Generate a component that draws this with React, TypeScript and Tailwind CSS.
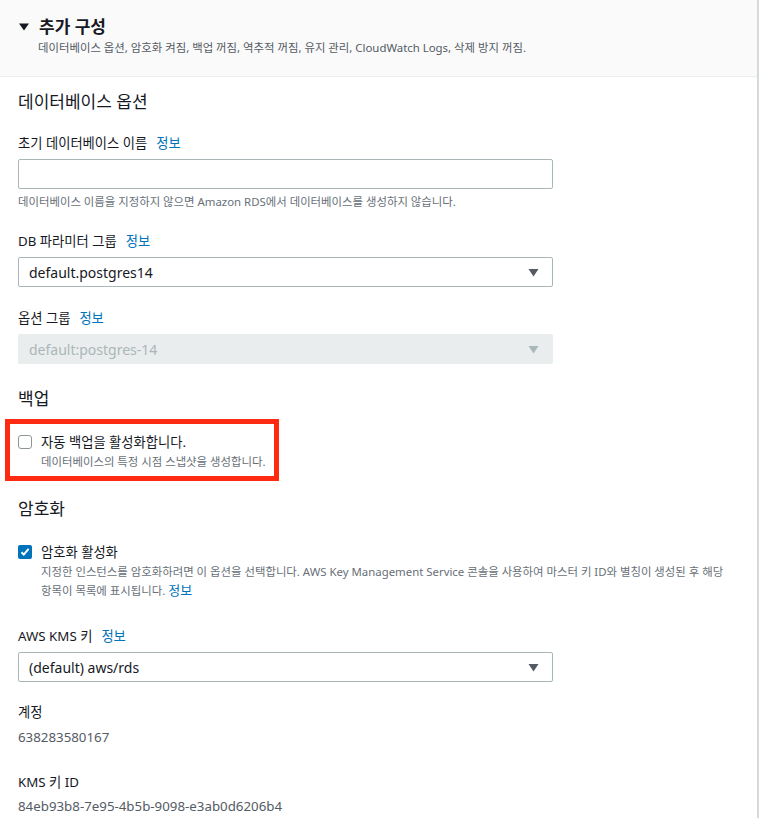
import React from "react";

const font = { fontFamily: '"Noto Sans", "Noto Sans CJK KR", sans-serif' };

function Caret({ disabled }: { disabled?: boolean }) {
  return (
    <svg width="11" height="9" viewBox="0 0 11 9" className="shrink-0">
      <path d="M0.5 1h10L5.5 8.5z" fill={disabled ? "#aab7b8" : "#545b64"} />
    </svg>
  );
}

function Label({ text, info = true }: { text: string; info?: boolean }) {
  return (
    <div className="text-[13.3px] leading-5 text-[#16191f]">
      {text}
      {info && <span className="ml-[9px] text-[#0073bb]">정보</span>}
    </div>
  );
}

function Select({ value, disabled }: { value: string; disabled?: boolean }) {
  return (
    <div
      className={
        disabled
          ? "flex h-[30px] w-[535px] items-center justify-between rounded-[2px] border border-[#eaeded] bg-[#eaeded] pl-[10px] pr-[13px] text-[14px] text-[#aab7b8]"
          : "flex h-[30px] w-[535px] items-center justify-between rounded-[2px] border border-[#aab7b8] bg-white pl-[10px] pr-[13px] text-[14px] text-[#16191f]"
      }
    >
      <span>{value}</span>
      <Caret disabled={disabled} />
    </div>
  );
}

export default function App() {
  return (
    <div style={font} className="min-h-[818px] w-[760px] bg-white">
      <div className="min-h-[818px] w-[759px] border-r-2 border-[#d5dbdb] bg-white">
        <div className="border-b border-[#eaeded] bg-[#fafafa] pb-5 pt-4">
          <div className="flex items-center gap-[10px] pl-[19px]">
            <svg width="10" height="8" viewBox="0 0 10 8">
              <path d="M0 0.5h10L5 7.5z" fill="#16191f" />
            </svg>
            <h1 className="text-[17px] font-bold leading-[22px] text-[#16191f]">추가 구성</h1>
          </div>
          <p className="mt-[2px] pl-[38px] text-[11.4px] leading-4 text-[#545b64]">
            데이터베이스 옵션, 암호화 켜짐, 백업 꺼짐, 역추적 꺼짐, 유지 관리, CloudWatch Logs, 삭제 방지 꺼짐.
          </p>
        </div>

        <div className="px-[18px] pt-[13px]">
          <h2 className="text-[17px] leading-6 text-[#16191f]">데이터베이스 옵션</h2>

          <div className="mt-[19px]">
            <Label text="초기 데이터베이스 이름" />
          </div>
          <div className="mt-[6px] h-[30px] w-[535px] rounded-[2px] border border-[#aab7b8] bg-white" />
          <p className="mt-[5px] text-[11.4px] leading-4 text-[#687078]">
            데이터베이스 이름을 지정하지 않으면 Amazon RDS에서 데이터베이스를 생성하지 않습니다.
          </p>

          <div className="mt-[21px]">
            <Label text="DB 파라미터 그룹" />
          </div>
          <div className="mt-[6px]">
            <Select value="default.postgres14" />
          </div>

          <div className="mt-[21px]">
            <Label text="옵션 그룹" />
          </div>
          <div className="mt-[6px]">
            <Select value="default:postgres-14" disabled />
          </div>

          <h2 className="mt-[23px] text-[17px] leading-6 text-[#16191f]">백업</h2>

          <div className="-ml-[13px] mt-2 inline-block border-[5px] border-[#ff2a12] pb-[6px] pl-[8px] pr-[8px] pt-2">
            <div className="flex items-start gap-[9px]">
              <div className="mt-[3px] h-[14px] w-[14px] rounded-[3px] border border-[#8d9696] bg-white" />
              <div>
                <div className="text-[13.3px] leading-5 text-[#16191f]">자동 백업을 활성화합니다.</div>
                <div className="mt-[2px] text-[11.4px] leading-4 text-[#687078]">
                  데이터베이스의 특정 시점 스냅샷을 생성합니다.
                </div>
              </div>
            </div>
          </div>

          <h2 className="mt-4 text-[17px] leading-6 text-[#16191f]">암호화</h2>

          <div className="mt-[21px] flex items-start gap-[9px]">
            <div className="mt-[3px] flex h-[14px] w-[14px] items-center justify-center rounded-[2px] bg-[#0073bb]">
              <svg width="10" height="10" viewBox="0 0 10 10">
                <path d="M1.5 5.2l2.3 2.4L8.6 1.8" fill="none" stroke="white" strokeWidth="2" />
              </svg>
            </div>
            <div>
              <div className="text-[13.3px] leading-5 text-[#16191f]">암호화 활성화</div>
              <p className="mt-[1px] whitespace-nowrap text-[11.4px] leading-[18px] text-[#687078]">
                지정한 인스턴스를 암호화하려면 이 옵션을 선택합니다. AWS Key Management Service 콘솔을 사용하여 마스터 키 ID와 별칭이 생성된 후 해당
                <br />
                항목이 목록에 표시됩니다. <span className="text-[13px] text-[#0073bb]">정보</span>
              </p>
            </div>
          </div>

          <div className="mt-[26px]">
            <Label text="AWS KMS 키" />
          </div>
          <div className="mt-[6px]">
            <Select value="(default) aws/rds" />
          </div>

          <div className="mt-5 text-[13.3px] leading-5 text-[#16191f]">계정</div>
          <div className="mt-[5px] text-[13.3px] leading-5 text-[#545b64]">638283580167</div>

          <div className="mt-[25px] text-[13.3px] leading-5 text-[#16191f]">KMS 키 ID</div>
          <div className="mt-[4px] text-[13.3px] leading-5 text-[#545b64]">84eb93b8-7e95-4b5b-9098-e3ab0d6206b4</div>
        </div>
      </div>
    </div>
  );
}
